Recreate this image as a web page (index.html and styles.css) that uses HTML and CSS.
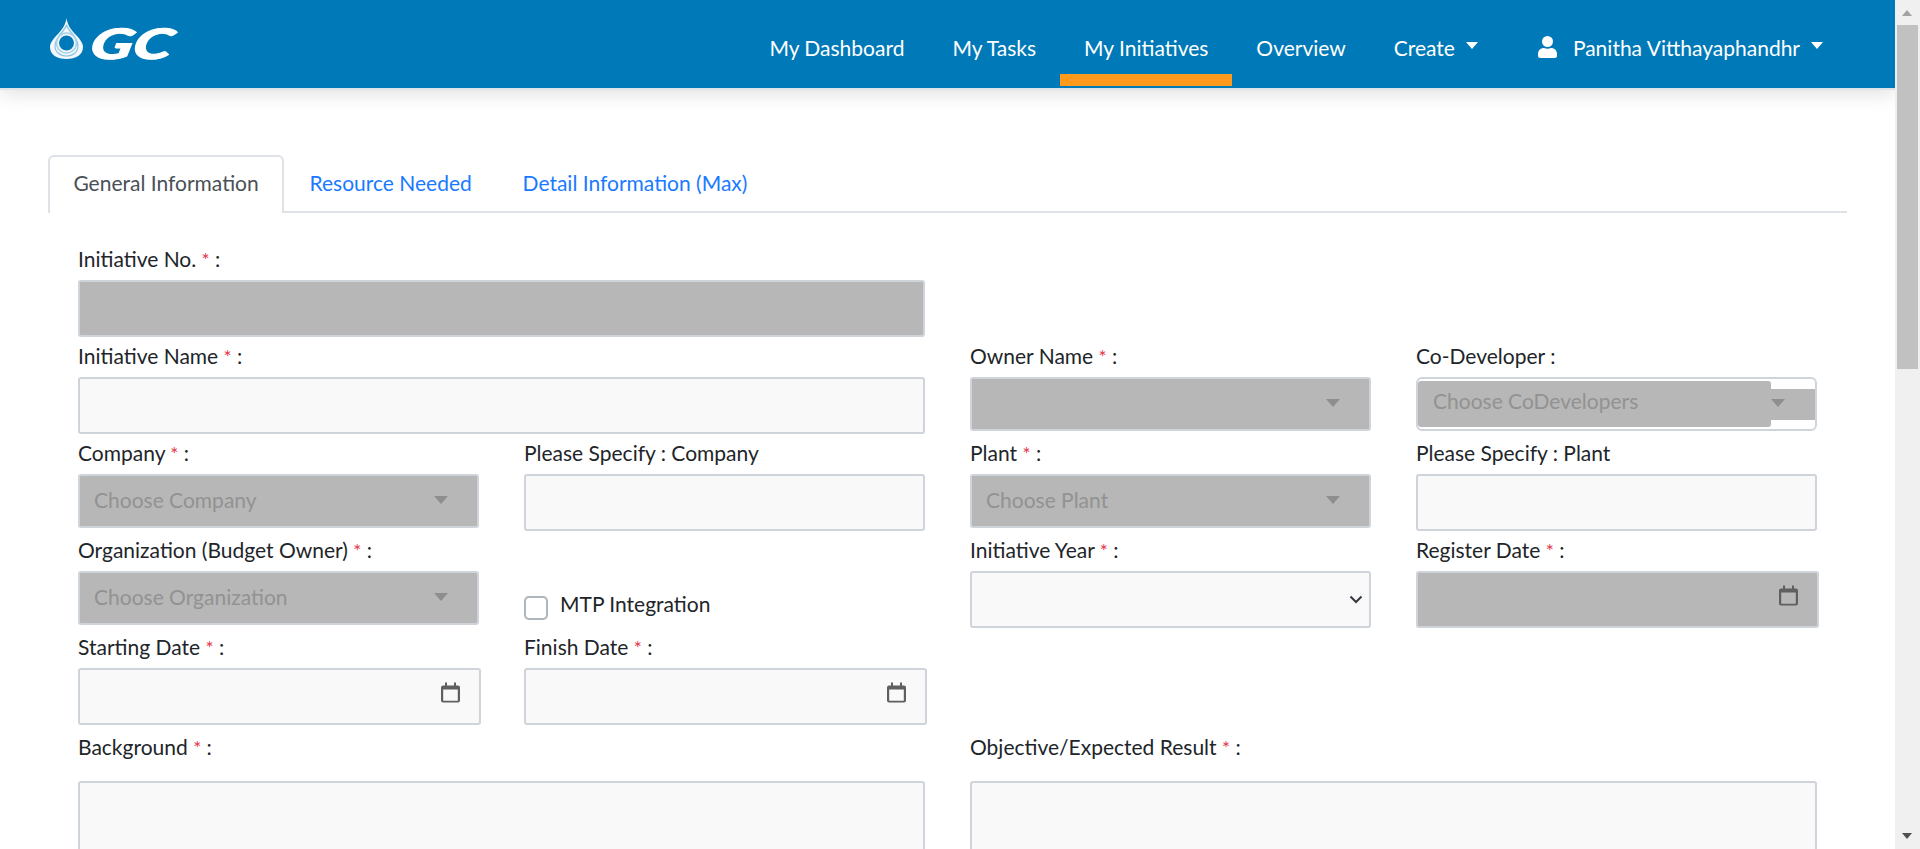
FILE: index.html
```html
<!DOCTYPE html>
<html lang="en">
<head>
<meta charset="utf-8">
<title>Initiative</title>
<link rel="stylesheet" href="styles.css">
</head>
<body>
<header class="navbar">
  <a class="logo" href="#">
    <svg class="logo-svg" width="140" height="60" viewBox="0 -4 140 60">
      <path d="M16.5 0 C17.5 7 20 10 25 16 C30 21 33 25 33 29 C33 37 26 41 16.5 41 C7 41 0 37 0 29 C0 25 3 21 8 16 C13 10 15.500 7 16.500 0Z" fill="#fff" fill-opacity=".95"/>
      <path d="M16.5 7 C15 13 5 19 5 28 C5 34 10 38 16.500 38 C23 38 28 34 28 28 C28 19 18 13 16.500 7Z" fill="none" stroke="#8cc4e0" stroke-width="1.2"/>
      <circle cx="16.500" cy="25" r="10" fill="none" stroke="#a6d2e8" stroke-width="1.500"/>
      <circle cx="16.500" cy="25" r="7.500" fill="#0079b8"/>
      <text class="logo-text" transform="translate(38 40.500) skewX(-12)" textLength="82" lengthAdjust="spacingAndGlyphs">GC</text>
    </svg>
  </a>
  <nav class="nav-links">
    <a class="nav-link" href="#">My Dashboard</a>
    <a class="nav-link" href="#">My Tasks</a>
    <a class="nav-link active" href="#">My Initiatives</a>
    <a class="nav-link" href="#">Overview</a>
    <a class="nav-link caret" href="#">Create</a>
    <a class="nav-link caret user" href="#">
      <svg width="19" height="22" viewBox="0 0 19 22"><circle cx="9.500" cy="5.500" r="5.500" fill="#fff"/><path d="M0 18 C0 14 3 12 6 12 C8 13 11 13 13 12 C16 12 19 14 19 18 V20 C19 21 18 22 17 22 H2 C1 22 0 21 0 20Z" fill="#fff"/></svg>
      Panitha Vitthayaphandhr
    </a>
  </nav>
</header>

<main class="page">
  <ul class="tabs">
    <li class="tab active">General Information</li>
    <li class="tab">Resource Needed</li>
    <li class="tab">Detail Information (Max)</li>
  </ul>

  <form class="form">
    <div class="row first">
      <div class="field span2">
        <label class="label">Initiative No. <span class="req">*</span> :</label>
        <div class="input disabled"></div>
      </div>
    </div>

    <div class="row">
      <div class="field span2">
        <label class="label">Initiative Name <span class="req">*</span> :</label>
        <div class="input"></div>
      </div>
      <div class="field">
        <label class="label">Owner Name <span class="req">*</span> :</label>
        <div class="select disabled"><span class="arrow"></span></div>
      </div>
      <div class="field">
        <label class="label">Co-Developer :</label>
        <div class="multi">
          <div class="multi-inner"><span class="placeholder">Choose CoDevelopers</span></div>
          <div class="multi-tail"><span class="arrow"></span></div>
        </div>
      </div>
    </div>

    <div class="row">
      <div class="field">
        <label class="label">Company <span class="req">*</span> :</label>
        <div class="select disabled"><span class="placeholder">Choose Company</span><span class="arrow"></span></div>
      </div>
      <div class="field">
        <label class="label">Please Specify : Company</label>
        <div class="input"></div>
      </div>
      <div class="field">
        <label class="label">Plant <span class="req">*</span> :</label>
        <div class="select disabled"><span class="placeholder">Choose Plant</span><span class="arrow"></span></div>
      </div>
      <div class="field">
        <label class="label">Please Specify : Plant</label>
        <div class="input"></div>
      </div>
    </div>

    <div class="row">
      <div class="field">
        <label class="label">Organization (Budget Owner) <span class="req">*</span> :</label>
        <div class="select disabled"><span class="placeholder">Choose Organization</span><span class="arrow"></span></div>
      </div>
      <div class="field check-field">
        <span class="checkbox"></span>
        <span class="check-label">MTP Integration</span>
      </div>
      <div class="field">
        <label class="label">Initiative Year <span class="req">*</span> :</label>
        <div class="input year">
          <svg width="14" height="9" viewBox="0 0 14 9"><path d="M1.500 1.500 L7 7 L12.500 1.500" fill="none" stroke="#343a40" stroke-width="2"/></svg>
        </div>
      </div>
      <div class="field">
        <label class="label">Register Date <span class="req">*</span> :</label>
        <div class="input date disabled wide">
          <svg class="cal" width="19" height="21" viewBox="0 0 19 21"><use href="#cal"/></svg>
        </div>
      </div>
    </div>

    <div class="row">
      <div class="field">
        <label class="label">Starting Date <span class="req">*</span> :</label>
        <div class="input date wide">
          <svg class="cal" width="19" height="21" viewBox="0 0 19 21"><use href="#cal"/></svg>
        </div>
      </div>
      <div class="field">
        <label class="label">Finish Date <span class="req">*</span> :</label>
        <div class="input date wide">
          <svg class="cal" width="19" height="21" viewBox="0 0 19 21"><use href="#cal"/></svg>
        </div>
      </div>
    </div>

    <div class="row last">
      <div class="field span2">
        <label class="label tall">Background <span class="req">*</span> :</label>
        <div class="textarea"></div>
      </div>
      <div class="field span2">
        <label class="label tall">Objective/Expected Result <span class="req">*</span> :</label>
        <div class="textarea"></div>
      </div>
    </div>
  </form>
</main>

<svg class="defs" width="0" height="0">
  <symbol id="cal" viewBox="0 0 19 21">
    <path d="M4 0.500 h2 v3 h7 v-3 h2 v3 h2 a2 2 0 0 1 2 2 v13 a2 2 0 0 1 -2 2 h-15 a2 2 0 0 1 -2 -2 v-13 a2 2 0 0 1 2 -2 h2z M2.200 7.500 v10.800 a.5 .5 0 0 0 .5 .5 h13.600 a.5 .5 0 0 0 .5 -.5 v-10.800z" fill="#5f5f5f"/>
  </symbol>
</svg>

<aside class="scrollbar">
  <span class="sb-up"></span>
  <span class="sb-thumb"></span>
  <span class="sb-down"></span>
</aside>
</body>
</html>
```

FILE: styles.css
```css
* { box-sizing: border-box; }
html, body { margin: 0; height: 849px; overflow: hidden; }
body {
  background: #fff;
  color: #212529;
  font-family: "Lato", "Liberation Sans", sans-serif;
  font-size: 21px;
  font-variant-ligatures: common-ligatures;
  width: 1895px;
}
a { text-decoration: none; color: inherit; }

.navbar {
  height: 88px;
  background: #0079b8;
  display: flex;
  align-items: stretch;
  justify-content: space-between;
  padding-left: 50px;
  box-shadow: 0 2px 0 #dfe3ea, 0 6px 18px rgba(0, 0, 0, .12);
  position: relative;
  z-index: 1;
}
.logo { display: block; padding-top: 14px; }
.logo-svg { display: block; }
.logo-text {
  font-family: "Lato", sans-serif;
  font-weight: 900;
  font-style: italic;
  font-size: 42px;
  fill: #fff;
  stroke: #fff;
  stroke-width: 1px;
}
.nav-links { display: flex; margin-right: 48px; }
.nav-link {
  color: #fff;
  font-size: 21px;
  padding: 6px 24px 0;
  display: flex;
  align-items: center;
  height: 88px;
  position: relative;
  white-space: nowrap;
}
.nav-link.active::after {
  content: "";
  position: absolute;
  left: 0; right: 0; bottom: 2px;
  height: 12px;
  background: #ff9a1d;
}
.nav-link.caret::after {
  content: "";
  margin-left: 11px;
  border-top: 7px solid #fff;
  border-left: 6.500px solid transparent;
  border-right: 6.500px solid transparent;
  margin-top: -4px;
}
.nav-link.user { gap: 16px; margin-left: 12px; }
.nav-link.user::after { margin-left: -5px; }

.page { padding: 67px 48px 0 48px; height: 761px; overflow: hidden; }
.tabs {
  list-style: none;
  margin: 0;
  padding: 0;
  display: flex;
  height: 58px;
  border-bottom: 2px solid #dee2e6;
  width: 1799px;
}
.tab {
  color: #1a7aff;
  font-size: 21px;
  padding: 0 23.400px 5px;
  height: 58px;
  display: flex;
  align-items: center;
  border: 2px solid transparent;
  border-bottom: 0;
}
.tab.active {
  color: #495057;
  background: #fff;
  border-color: #dee2e6;
  border-radius: 6px 6px 0 0;
}

.form { padding: 0 30px; width: 1799px; }
.row {
  display: grid;
  grid-template-columns: 401px 401px 401px 401px;
  column-gap: 45px;
  height: 97px;
  align-content: start;
}
.row.first { height: 132px; padding-top: 35px; }
.row.last { height: 210px; }
.field { display: flex; flex-direction: column; min-width: 0; }
.span2 { grid-column: span 2; }
.label {
  display: block;
  font-size: 21px;
  line-height: 24px;
  height: 24px;
  margin-top: -1px;
  margin-bottom: 9px;
  color: #212529;
  white-space: nowrap;
}
.label.tall { margin-top: 2px; margin-bottom: 22px; }
.req { color: #e5354b; font-size: 19px; }

.input, .select, .textarea, .multi {
  border: 2px solid #ced4da;
  border-radius: 3px;
  background: #f9f9f9;
  position: relative;
}
.input { height: 57px; }
.select { height: 54px; display: flex; align-items: center; padding: 0 0 3px 14px; }
.disabled { background: #b7b7b7; }
.placeholder { color: #929292; font-size: 21px; }
.arrow {
  position: absolute;
  right: 29px;
  top: 20px;
  border-top: 8px solid #8e8e8e;
  border-left: 7.500px solid transparent;
  border-right: 7.500px solid transparent;
}
.multi {
  height: 54px;
  background: #fff;
  border-radius: 6px;
  padding: 2px 0;
  display: flex;
}
.multi-inner {
  background: #b7b7b7;
  width: 353px;
  height: 46px;
  border-radius: 3px;
  display: flex;
  align-items: center;
  padding: 0 0 7px 15px;
  flex: none;
}
.multi-tail {
  flex: 1;
  background: #b7b7b7;
  height: 31px;
  margin-top: 8px;
  position: relative;
}
.multi-tail .arrow { right: auto; left: 0; top: 10px; }
.year { display: flex; align-items: center; justify-content: flex-end; padding-right: 6px; }
.date { display: flex; align-items: center; justify-content: flex-end; padding-right: 19px; padding-bottom: 8px; }
.wide { width: 403px; }
.check-field { flex-direction: row; align-items: flex-start; padding-top: 54px; }
.checkbox {
  width: 24px;
  height: 24px;
  border: 2px solid #adb5bd;
  border-radius: 5px;
  background: #fff;
  margin-top: 3px;
  flex: none;
}
.check-label { margin-left: 12px; margin-top: -1px; line-height: 24px; font-size: 21px; color: #212529; }
.textarea { height: 140px; }
.defs { position: absolute; }

.scrollbar {
  position: fixed;
  right: 0;
  top: 0;
  width: 25px;
  height: 849px;
  background: #f0f0f0;
  z-index: 2;
}
.sb-up, .sb-down {
  position: absolute;
  left: 7px;
  border-left: 5.500px solid transparent;
  border-right: 5.500px solid transparent;
}
.sb-up { top: 10px; border-bottom: 6px solid #a3a3a3; }
.sb-down { bottom: 10px; border-top: 6px solid #505050; }
.sb-thumb {
  position: absolute;
  left: 2px;
  top: 25px;
  width: 21px;
  height: 344px;
  background: #c1c1c1;
}
```
